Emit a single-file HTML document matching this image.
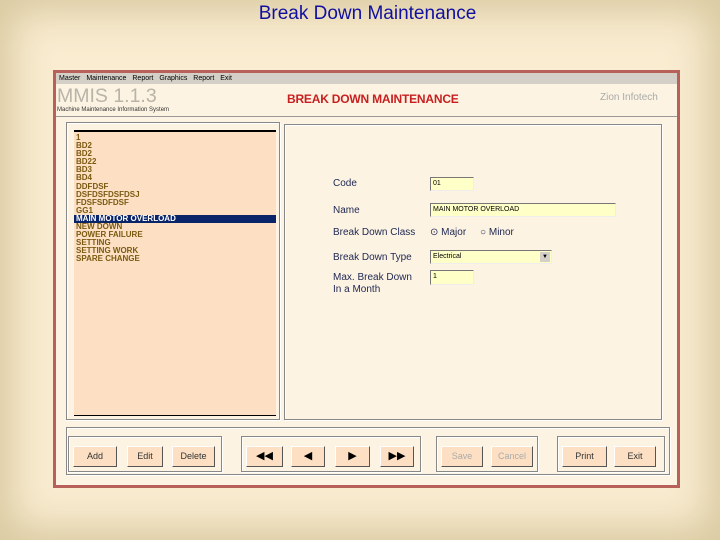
<!DOCTYPE html>
<html><head><style>
*{margin:0;padding:0;box-sizing:border-box}
body{width:720px;height:540px;overflow:hidden;position:relative;font-family:"Liberation Sans",sans-serif;
background:#f9ecd0;box-shadow:inset 0 0 40px 12px #d9c9a0;}
.a{position:absolute}
.title{left:0;width:735px;top:3px;text-align:center;color:#1010a0;font-size:19px}
.win{left:53px;top:70px;width:627px;height:418px;border:3px solid #b8605a;background:#fcf3e2}
.menu{left:0;top:0;width:621px;height:11px;background:#d4d0c8;font-size:7px;line-height:11px;padding-left:3px;color:#000;word-spacing:4px}
.btn{position:absolute;top:446px;height:21px;background:#fde0c3;border:1px solid;border-color:#fff #555 #555 #fff;font-size:9px;line-height:19px;text-align:center;color:#333}
.grp{position:absolute;border:1px solid #888;box-shadow:1px 1px 0 #fff, inset 1px 1px 0 #fff}
.lbl{position:absolute;left:333px;font-size:10px;color:#222a55}
.in{position:absolute;left:430px;background:#ffffc8;border:1px solid;border-color:#777 #eee #eee #777;font-size:7px;line-height:12px;padding-left:2px}
.li{font-size:8px;line-height:8.1px;color:#7a5a10;font-weight:bold;padding-left:2px;white-space:nowrap}
</style></head><body>
<div class="a title">Break Down Maintenance</div>
<div class="a win">
 <div class="a menu">Master Maintenance Report Graphics&nbsp;Report Exit</div>
 <div class="a" style="left:1px;top:12px;font-size:19.5px;color:#b8b4a8">MMIS 1.1.3</div>
 <div class="a" style="left:1px;top:34px;font-size:6px;color:#333">Machine Maintenance Information System</div>
 <div class="a" style="left:231px;top:19px;font-size:12px;font-weight:bold;color:#c82020;letter-spacing:-0.2px">BREAK DOWN MAINTENANCE</div>
 <div class="a" style="left:544px;top:19px;font-size:10px;color:#aaa">Zion Infotech</div>
 <div class="a" style="left:0;top:43px;width:621px;border-top:1px solid #999"></div>
</div>
<div class="grp" style="left:66px;top:122px;width:214px;height:298px"></div>
<div class="a" style="left:74px;top:130px;width:202px;height:286px;background:#fde0c3;border-top:2px solid #000;border-bottom:1px solid #000;padding-top:2px">
<div class="li">1</div><div class="li">BD2</div><div class="li">BD2</div><div class="li">BD22</div><div class="li">BD3</div><div class="li">BD4</div><div class="li">DDFDSF</div><div class="li">DSFDSFDSFDSJ</div><div class="li">FDSFSDFDSF</div><div class="li">GG1</div>
<div class="li" style="background:#0a246a;color:#fff">MAIN MOTOR OVERLOAD</div>
<div class="li">NEW DOWN</div><div class="li">POWER FAILURE</div><div class="li">SETTING</div><div class="li">SETTING WORK</div><div class="li">SPARE CHANGE</div>
</div>
<div class="grp" style="left:284px;top:124px;width:378px;height:296px"></div>
<div class="lbl" style="top:178px">Code</div><div class="in" style="top:177px;width:44px;height:14px">01</div>
<div class="lbl" style="top:205px">Name</div><div class="in" style="top:203px;width:186px;height:14px">MAIN MOTOR OVERLOAD</div>
<div class="lbl" style="top:227px">Break Down Class</div>
<div class="a" style="left:430px;top:227px;font-size:10px;color:#222a55">⊙ Major &nbsp;&nbsp;&nbsp;&nbsp;○ Minor</div>
<div class="lbl" style="top:252px">Break Down Type</div><div class="in" style="top:250px;width:122px;height:14px">Electrical<span style="position:absolute;right:1px;top:1px;width:10px;height:10px;background:#d4d0c8;font-size:6px;line-height:10px;text-align:center">▼</span></div>
<div class="lbl" style="top:272px;line-height:12px">Max. Break Down<br>In a Month</div><div class="in" style="top:270px;width:44px;height:15px">1</div>
<div class="grp" style="left:66px;top:427px;width:604px;height:48px"></div>
<div class="grp" style="left:68px;top:436px;width:154px;height:36px"></div>
<div class="grp" style="left:241px;top:436px;width:180px;height:36px"></div>
<div class="grp" style="left:436px;top:436px;width:102px;height:36px"></div>
<div class="grp" style="left:557px;top:436px;width:108px;height:36px"></div>
<div class="btn" style="left:73px;width:44px">Add</div>
<div class="btn" style="left:127px;width:36px">Edit</div>
<div class="btn" style="left:172px;width:43px">Delete</div>
<div class="btn" style="left:246px;width:37px;font-size:11px;color:#000">◀◀</div>
<div class="btn" style="left:291px;width:34px;font-size:11px;color:#000">◀</div>
<div class="btn" style="left:335px;width:35px;font-size:11px;color:#000">▶</div>
<div class="btn" style="left:380px;width:34px;font-size:11px;color:#000">▶▶</div>
<div class="btn" style="left:441px;width:42px;color:#aaa">Save</div>
<div class="btn" style="left:491px;width:42px;color:#aaa">Cancel</div>
<div class="btn" style="left:562px;width:45px">Print</div>
<div class="btn" style="left:614px;width:42px">Exit</div>
</body></html>
